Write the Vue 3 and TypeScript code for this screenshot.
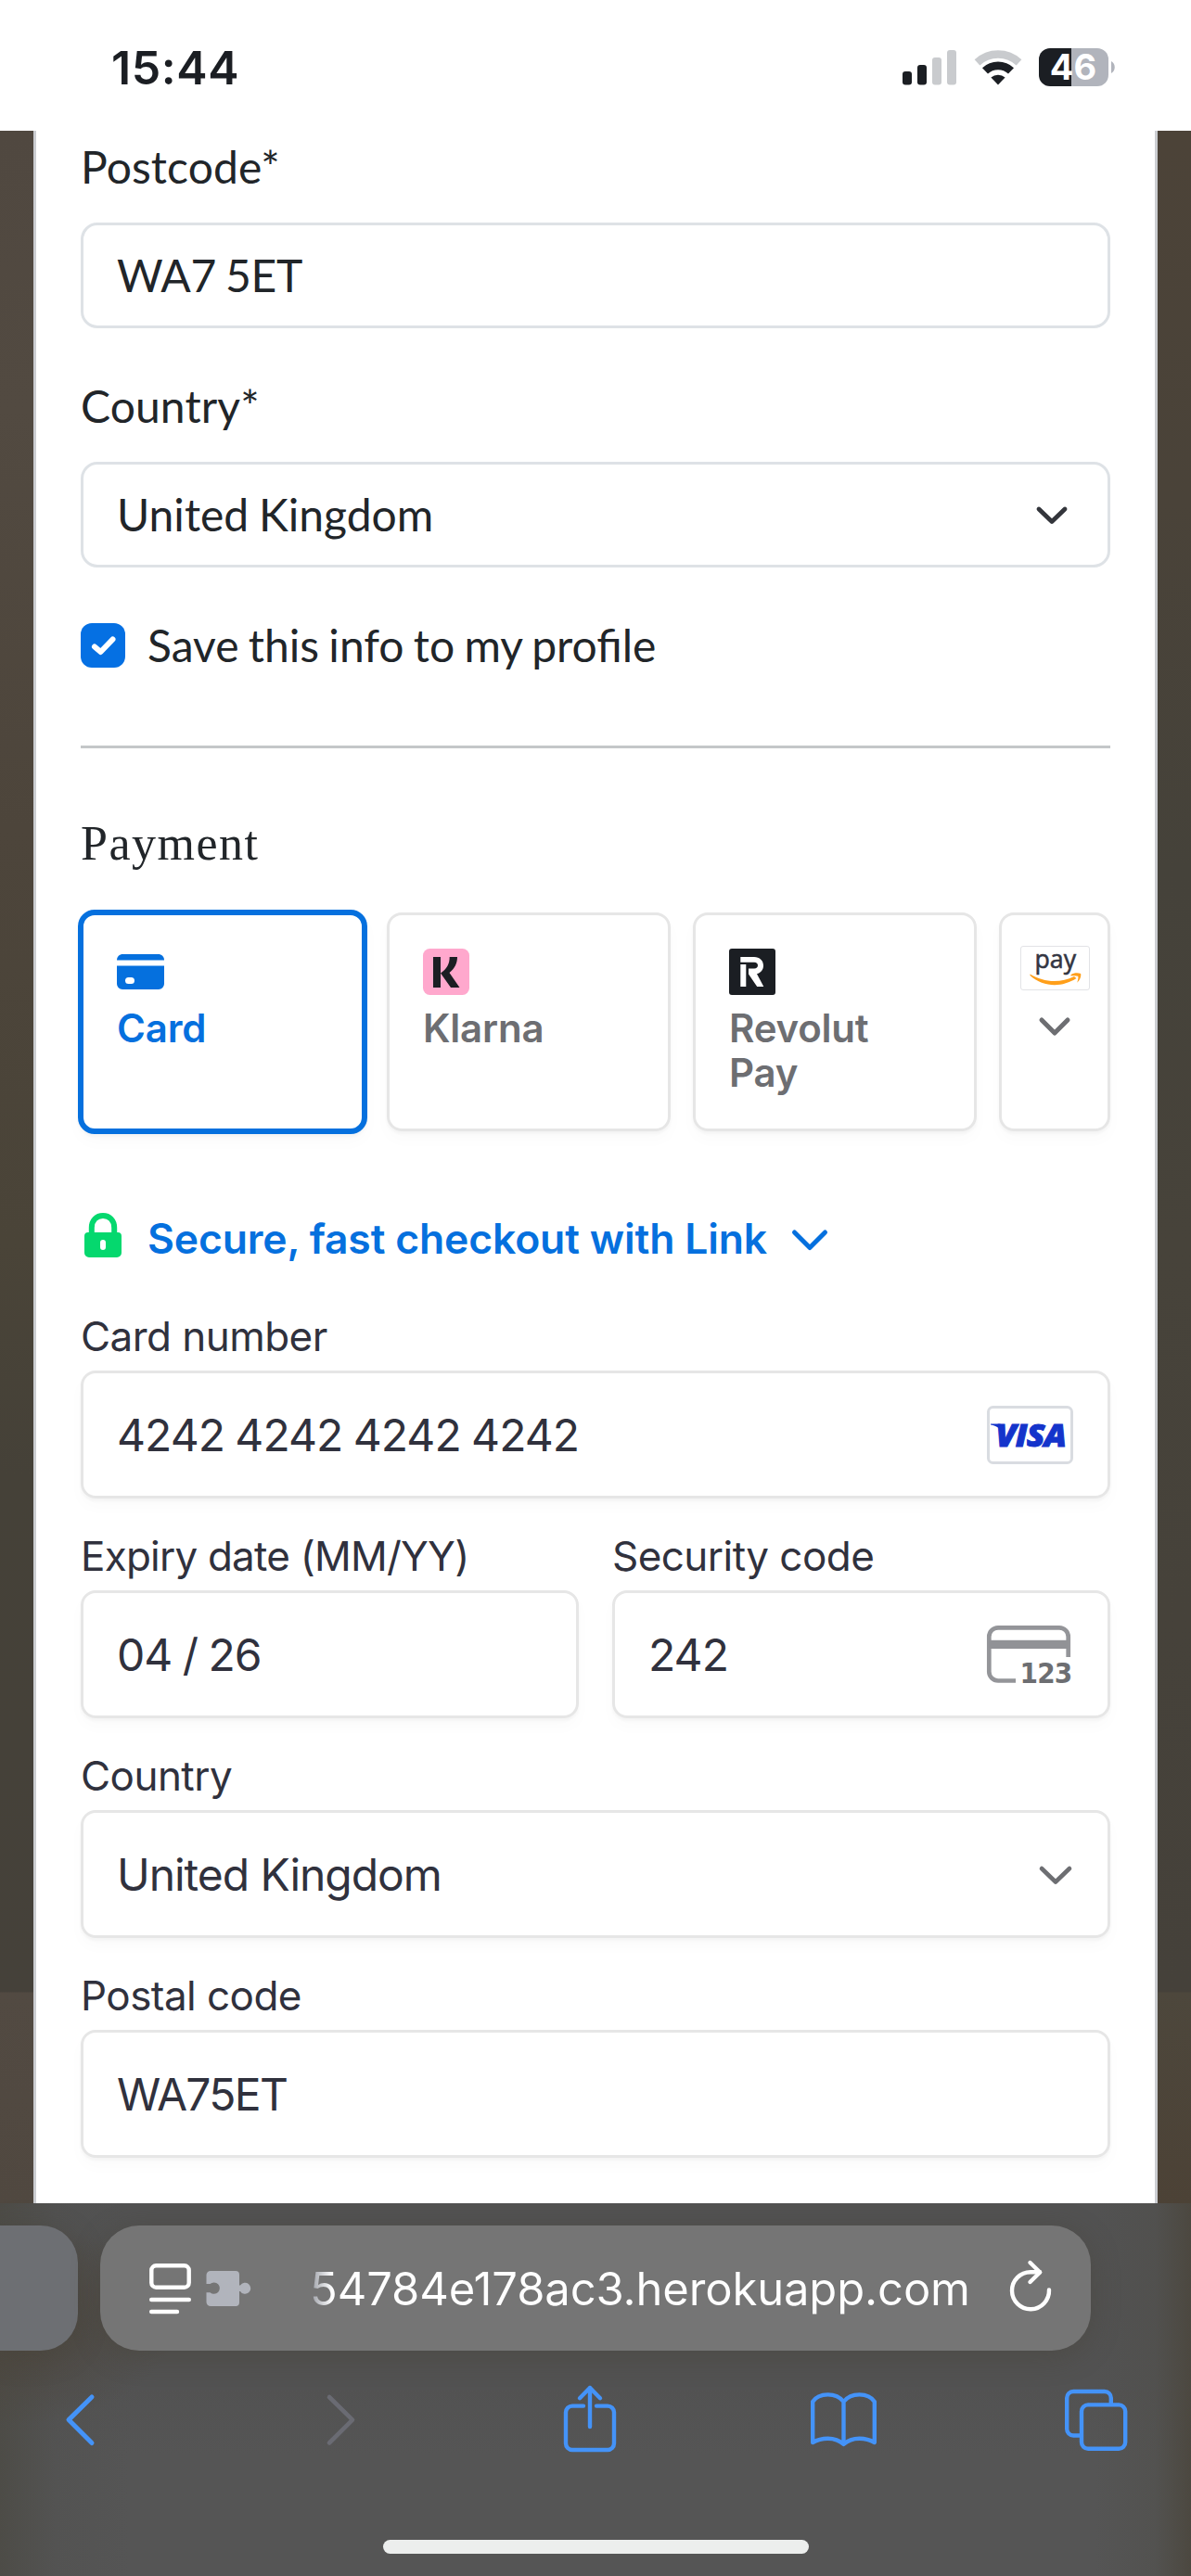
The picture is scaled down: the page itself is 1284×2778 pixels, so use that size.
<script setup lang="ts">
interface Method {
  id: string
  label: string
}

const methods: Method[] = [
  { id: 'card', label: 'Card' },
  { id: 'klarna', label: 'Klarna' },
  { id: 'revolut', label: 'Revolut Pay' },
]
const selected = 'card'

const address = {
  postcode: 'WA7 5ET',
  country: 'United Kingdom',
}

const card = {
  number: '4242 4242 4242 4242',
  expiry: '04 / 26',
  cvc: '242',
  country: 'United Kingdom',
  postal: 'WA75ET',
}

const host = '54784e178ac3.herokuapp.com'
</script>

<template>
  <div class="screen">
    <header class="status">
      <span class="time">15:44</span>
      <div class="indicators">
        <svg class="signal" width="58" height="38" viewBox="0 0 58 38">
          <rect x="0" y="23" width="10" height="14.5" rx="3" fill="#1b1e23" />
          <rect x="16" y="16" width="10" height="21.5" rx="3" fill="#1b1e23" />
          <rect x="32" y="8" width="10" height="29.5" rx="3" fill="#c9cbce" />
          <rect x="48" y="0" width="10" height="37.5" rx="3" fill="#c9cbce" />
        </svg>
        <svg class="wifi" width="52" height="38" viewBox="0 0 52 38">
          <path d="M3.5 13.4 A33 33 0 0 1 48.5 13.4" fill="none" stroke="#c9cbce" stroke-width="8.4" />
          <path d="M12 22.4 A20.5 20.5 0 0 1 40 22.4" fill="none" stroke="#1b1e23" stroke-width="8.8" />
          <path d="M26 37.5 L18.4 29.6 A11.5 11.5 0 0 1 33.6 29.6 Z" fill="#1b1e23" />
        </svg>
        <div class="battery"><span>46</span></div>
        <svg class="tip" width="4" height="13" viewBox="0 0 4 13">
          <path d="M0 0 C5 2.5 5 10.5 0 13 Z" fill="#b1b4bc" />
        </svg>
      </div>
    </header>

    <main class="page">
      <section class="sheet">
        <div class="label">Postcode*</div>
        <div class="box">
          <span class="tight">{{ address.postcode }}</span>
        </div>

        <div class="label second">Country*</div>
        <div class="box">
          <span class="country">{{ address.country }}</span>
          <svg class="chev-a" width="36" height="24" viewBox="0 0 36 24">
            <path d="M4 5 L18 18.5 L32 5" fill="none" stroke="#33353b" stroke-width="4.8" stroke-linecap="round" stroke-linejoin="round" />
          </svg>
        </div>

        <div class="save">
          <span class="check">
            <svg width="48" height="48" viewBox="0 0 48 48">
              <path d="M15 25.5 L21.5 31 L34.5 17.5" fill="none" stroke="#fff" stroke-width="6" stroke-linecap="round" stroke-linejoin="round" />
            </svg>
          </span>
          <span class="save-text">Save this info to my profile</span>
        </div>

        <div class="rule"></div>

        <h2 class="title">Payment</h2>

        <div class="tabs">
          <div v-for="m in methods" :key="m.id" class="tab" :class="{ active: m.id === selected }">
            <div class="logo">
              <svg v-if="m.id === 'card'" width="51" height="38" viewBox="0 0 51 38">
                <path d="M0 6.4 C0 2.5 2.8 0 6.5 0 H44.5 C48.2 0 51 2.5 51 6.4 Z" fill="#0570de" />
                <path fill-rule="evenodd" d="M0 12.6 H51 V32 a6 6 0 0 1 -6 6 H6 a6 6 0 0 1 -6 -6 Z M12.5 25 a3.5 3.5 0 0 0 0 7 H15.5 a3.5 3.5 0 0 0 0 -7 Z" fill="#0570de" />
              </svg>
              <svg v-else-if="m.id === 'klarna'" width="50" height="50" viewBox="0 0 50 50">
                <rect width="50" height="50" rx="7.5" fill="#ffa8cd" />
                <path d="M11 9 H19 V42 H11 Z M28.7 9 H37 C37 16 34 21.5 28.5 26 L39.5 42 H30 L19 26.5 C25.5 22 28.7 17 28.7 9 Z" fill="#1b1e23" />
              </svg>
              <svg v-else width="50" height="50" viewBox="0 0 50 50">
                <rect width="50" height="50" rx="3" fill="#1b1e23" />
                <path d="M12.3 17 H18.3 V41 H12.3 Z M12.3 9 H27 C33 9 37 13 37 18.3 C37 22.8 34.2 26.2 30 27.3 L37.3 41 H30.2 L21 27.4 V21.6 H27.2 C29.5 21.6 31 20.2 31 18.1 C31 16 29.5 14.7 27.2 14.7 H12.3 Z" fill="#fff" />
              </svg>
            </div>
            <div class="tab-label">{{ m.label }}</div>
          </div>
          <div class="tab more">
            <svg width="75" height="48" viewBox="0 0 75 48">
              <rect x="0.5" y="0.5" width="74" height="47" rx="2.5" fill="#fff" stroke="#e2e3e6" />
              <text x="15.5" y="23.6" font-family="Open Sans, sans-serif" font-size="28" textLength="44.5" lengthAdjust="spacingAndGlyphs" fill="#333542" stroke="#333542" stroke-width="0.6">pay</text>
              <path d="M10.5 30.5 C25 39.5 43 40.5 58 33 L60.5 35 C45 45 25 45 10.5 32 Z" fill="#ff9f1a" />
              <path d="M54.5 31.2 C57.5 29 62 28.8 65.2 30 C65.8 33 64.2 37 61.2 39.8 C62.2 36.6 62.8 34 62.2 32.8 C60.5 32 57.5 32 54.5 32.5 Z" fill="#ff9f1a" />
            </svg>
            <svg class="more-chev" width="38" height="24" viewBox="0 0 38 24">
              <path d="M5 4 L19 18 L33 4" fill="none" stroke="#6d6e72" stroke-width="5" stroke-linecap="round" stroke-linejoin="round" />
            </svg>
          </div>
        </div>

        <div class="link-row">
          <svg class="lock" width="40" height="48" viewBox="0 0 40 48">
            <path d="M7.8 23 V16 C7.8 8 13 3 20 3 S32.2 8 32.2 16 V23" fill="none" stroke="#05d86e" stroke-width="6" />
            <path fill-rule="evenodd" d="M4 21 H36 a4 4 0 0 1 4 4 V43 a5 5 0 0 1 -5 5 H5 a5 5 0 0 1 -5 -5 V25 a4 4 0 0 1 4 -4 Z M20 29 a3 3 0 0 0 -3 3 V37 a3 3 0 0 0 6 0 V32 a3 3 0 0 0 -3 -3 Z" fill="#05d86e" />
          </svg>
          <span class="link-text">Secure, fast checkout with Link</span>
          <svg class="link-chev" width="42" height="28" viewBox="0 0 42 28">
            <path d="M4.5 5 L21 21.5 L37.5 5" fill="none" stroke="#0570de" stroke-width="5" stroke-linecap="round" stroke-linejoin="round" />
          </svg>
        </div>

        <div class="fields">
          <div class="field">
            <div class="flabel">Card number</div>
            <div class="fbox">
              <span class="digits">{{ card.number }}</span>
              <svg class="visa" width="93" height="63" viewBox="0 0 93 63">
                <rect x="1.5" y="1.5" width="90" height="60" rx="5" fill="#fff" stroke="#d9dce1" stroke-width="3" />
                <text x="9.5" y="44" font-family="Open Sans, sans-serif" font-size="34" font-style="italic" font-weight="800" textLength="75.5" lengthAdjust="spacingAndGlyphs" fill="#1434cb" stroke="#1434cb" stroke-width="1">VISA</text>
                <path d="M4 19.4 H13 C15.5 19.4 16.8 20.6 17.4 23.5 L19 32 C15.5 25 10.5 21.6 4 20.6 Z" fill="#1434cb" />
              </svg>
            </div>
          </div>

          <div class="pair">
            <div class="field">
              <div class="flabel expiry">Expiry date (MM/YY)</div>
              <div class="fbox"><span class="digits">{{ card.expiry }}</span></div>
            </div>
            <div class="field">
              <div class="flabel">Security code</div>
              <div class="fbox">
                <span class="digits">{{ card.cvc }}</span>
                <svg class="cvc" width="93" height="63" viewBox="0 0 93 63">
                  <path d="M31 59.5 H12 a9.7 9.7 0 0 1 -9.7 -9.7 V12 a9.7 9.7 0 0 1 9.7 -9.7 H78 a9.7 9.7 0 0 1 9.7 9.7 V34" fill="none" stroke="#949599" stroke-width="4.7" />
                  <rect x="2" y="15.8" width="86" height="9.2" fill="#919296" />
                  <text x="35.5" y="62" font-family="DejaVu Sans, sans-serif" font-size="31" font-weight="700" textLength="56" lengthAdjust="spacingAndGlyphs" fill="#6d6e72">123</text>
                </svg>
              </div>
            </div>
          </div>

          <div class="field">
            <div class="flabel">Country</div>
            <div class="fbox">
              <span class="region">{{ card.country }}</span>
              <svg class="chev-b" width="38" height="24" viewBox="0 0 38 24">
                <path d="M4 5 L19 19.5 L34 5" fill="none" stroke="#6d6e72" stroke-width="4.6" stroke-linecap="round" stroke-linejoin="round" />
              </svg>
            </div>
          </div>

          <div class="field">
            <div class="flabel">Postal code</div>
            <div class="fbox"><span class="postal">{{ card.postal }}</span></div>
          </div>
        </div>
      </section>
    </main>

    <footer class="browser">
      <div class="urls">
        <div class="prev"></div>
        <div class="pill">
          <svg class="reader" width="48" height="58" viewBox="0 0 48 58">
            <rect x="3.3" y="3.3" width="40.4" height="23.4" rx="5" fill="none" stroke="#fff" stroke-width="4.4" />
            <path d="M3.2 40 H43.8 M3.2 53 H31" stroke="#fff" stroke-width="4.4" stroke-linecap="round" />
          </svg>
          <svg class="puzzle" width="48" height="40" viewBox="0 0 48 40">
            <path d="M5 1 H32 a4 4 0 0 1 4 4 V16.5 H37 A6.1 6.1 0 1 1 37 23 H36 V35 a4 4 0 0 1 -4 4 H5 a4.5 4.5 0 0 1 -4.5 -4.5 V24.2 H4.5 A6.2 6.2 0 1 0 4.5 15 H0.5 V5.5 a4.5 4.5 0 0 1 4.5 -4.5 Z" fill="#b1b4bc" />
          </svg>
          <span class="host">{{ host }}</span>
          <svg class="reload" width="52" height="60" viewBox="0 0 52 60">
            <path d="M46 34.5 A20 20 0 1 1 26 15.2 H36" fill="none" stroke="#fff" stroke-width="4.4" stroke-linecap="round" />
            <path d="M25.5 5 L36.2 15.5 L25.5 26" fill="none" stroke="#fff" stroke-width="4.4" stroke-linecap="round" stroke-linejoin="round" />
          </svg>
        </div>
      </div>

      <nav class="tools">
        <svg class="t-back" width="38" height="60" viewBox="0 0 38 60">
          <path d="M31 5 L6 29.6 L31 54.5" fill="none" stroke="#4493f8" stroke-width="5" stroke-linecap="round" stroke-linejoin="round" />
        </svg>
        <svg class="t-fwd" width="38" height="60" viewBox="0 0 38 60">
          <path d="M7 5 L32 29.6 L7 54.5" fill="none" stroke="#6a6b73" stroke-width="4.6" stroke-linecap="round" stroke-linejoin="round" />
        </svg>
        <svg class="t-share" width="62" height="76" viewBox="0 0 62 76">
          <path d="M24 24.6 H12 a7 7 0 0 0 -7 7 V65 a7 7 0 0 0 7 7 H50 a7 7 0 0 0 7 -7 V31.6 a7 7 0 0 0 -7 -7 H38 M31 5 V47 M20 16.2 L31 5 L42 16.2" fill="none" stroke="#4493f8" stroke-width="4.4" stroke-linecap="round" stroke-linejoin="round" />
        </svg>
        <svg class="t-book" width="76" height="64" viewBox="0 0 76 64">
          <path d="M37.5 12 C33.5 7 27.5 4.4 20.5 4.4 C13.5 4.4 7.5 7 4.2 12 V56 C8.5 53.5 14 51.8 20.5 51.8 C27.5 51.8 33 53.8 37.5 58 C42 53.8 47.5 51.8 54.5 51.8 C61 51.8 66.5 53.5 70.8 56 V12 C67.5 7 61.5 4.4 54.5 4.4 C47.5 4.4 41.5 7 37.5 12 Z M37.5 12 V58" fill="none" stroke="#4493f8" stroke-width="4.4" stroke-linejoin="round" />
        </svg>
        <svg class="t-tabs" width="72" height="72" viewBox="0 0 72 72">
          <path d="M51.8 17 V11 a7 7 0 0 0 -7 -7 H11.2 a7 7 0 0 0 -7 7 V44.5 a7 7 0 0 0 7 7 H19" fill="none" stroke="#4493f8" stroke-width="4.4" />
          <rect x="20" y="18.4" width="47.2" height="47.4" rx="7" fill="none" stroke="#4493f8" stroke-width="4.4" />
        </svg>
      </nav>

      <div class="home"></div>
    </footer>
  </div>
</template>

<style>
body {
  margin: 0;
  background: #fff;
}
</style>

<style scoped>
.screen {
  width: 1284px;
  height: 2778px;
  display: flex;
  flex-direction: column;
  overflow: hidden;
  background: #fff;
  font-family: Inter, sans-serif;
}

.screen svg {
  display: block;
  flex: none;
  overflow: visible;
}

.status {
  box-sizing: border-box;
  height: 141px;
  flex: none;
  padding: 4px 82px 0 120px;
  display: flex;
  align-items: center;
  justify-content: space-between;
}

.time {
  font-size: 50px;
  font-weight: 600;
  letter-spacing: 0.6px;
  color: #1b1e23;
}

.indicators {
  display: flex;
  align-items: center;
}

.wifi {
  margin-left: 18.5px;
}

.battery {
  width: 75px;
  height: 41px;
  margin-left: 18.5px;
  border-radius: 12px;
  background: linear-gradient(90deg, #1b1e23 35px, #b1b4bc 35px);
  color: #fff;
  font-size: 38px;
  font-weight: 700;
  line-height: 41px;
  text-align: center;
  text-indent: -1px;
}

.tip {
  margin-left: 3px;
}

.page {
  height: 2235px;
  flex: none;
  padding: 0 36px;
  background:
    linear-gradient(180deg, #504840 0, #524a41 300px, #4d453b 750px, #4a4438 1200px, #454138 1450px, #45413a 2007px, #524a42 2008px, #504840 2235px) 0 0 / 642px 100% no-repeat,
    linear-gradient(180deg, #4c4338 0, #4a4339 400px, #45423a 800px, #47433a 1200px, #45413a 2007px, #4d473c 2008px, #4c4236 2235px) 642px 0 / 642px 100% no-repeat;
}

.sheet {
  box-sizing: border-box;
  width: 1212px;
  height: 2235px;
  padding: 3px 48px 0;
  border: solid #cbcdd1;
  border-width: 0 3px;
  background: #fff;
  overflow: hidden;
}

.label,
.box,
.save {
  font-family: Lato, sans-serif;
  font-size: 48px;
  line-height: 72px;
  color: #212529;
  white-space: nowrap;
}

.label {
  margin-bottom: 24px;
  letter-spacing: 0.1px;
}

.second {
  margin-top: 48px;
}

.box {
  box-sizing: border-box;
  height: 114px;
  padding: 0 42px 0 36px;
  border: 3px solid #dee2e6;
  border-radius: 18px;
  display: flex;
  align-items: center;
  justify-content: space-between;
}

.tight {
  letter-spacing: -0.3px;
  word-spacing: -2px;
}

.country {
  word-spacing: -1.5px;
}

.save {
  margin-top: 48px;
  display: flex;
  align-items: flex-start;
}

.check {
  width: 48px;
  height: 48px;
  margin: 12px 24px 0 0;
  border-radius: 12px;
  background: #0570e3;
}

.save-text {
  word-spacing: -2px;
}

.rule {
  height: 3px;
  margin-top: 72px;
  background: #c4c7c9;
}

.title {
  margin: 73px 0 44px;
  font-family: "Liberation Serif", serif;
  font-size: 52px;
  font-weight: 400;
  line-height: 60px;
  letter-spacing: 1.5px;
  color: #212529;
}

.tabs {
  display: flex;
  gap: 24px;
}

.tab {
  box-sizing: border-box;
  width: 306px;
  height: 236px;
  padding: 36px;
  border: 3px solid #e6e6e6;
  border-radius: 16px;
  box-shadow: 0 3px 3px rgba(0, 0, 0, 0.03), 0 9px 18px rgba(0, 0, 0, 0.02);
}

.tab.active {
  width: 312px;
  height: 242px;
  margin: -3px;
  border: 6px solid #0570de;
  border-radius: 18px;
}

.logo {
  height: 50px;
  display: flex;
  align-items: center;
}

.tab-label {
  width: 190px;
  margin-top: 11.5px;
  font-size: 42px;
  font-weight: 600;
  line-height: 48px;
  letter-spacing: -0.2px;
  color: #6d6e72;
}

.active .tab-label {
  color: #0570de;
}

.more {
  width: 120px;
  padding: 33px 0 0;
  display: flex;
  flex-direction: column;
  align-items: center;
}

.more-chev {
  margin-top: 27.5px;
}

.link-row {
  margin-top: 86px;
  height: 60px;
  padding-left: 4px;
  display: flex;
  align-items: flex-start;
}

.lock {
  margin-top: 2px;
}

.link-text {
  margin-left: 28px;
  font-size: 44.5px;
  font-weight: 600;
  line-height: 60px;
  letter-spacing: -0.16px;
  color: #0570de;
  white-space: nowrap;
}

.link-chev {
  margin: 18px 0 0 25px;
}

.fields {
  margin-top: 48px;
  display: flex;
  flex-direction: column;
  gap: 35px;
}

.pair {
  display: grid;
  grid-template-columns: 1fr 1fr;
  gap: 36px;
}

.flabel {
  margin-bottom: 10px;
  font-size: 44px;
  line-height: 54px;
  letter-spacing: -0.55px;
  color: #30313d;
  white-space: nowrap;
}

.flabel.expiry {
  letter-spacing: -0.78px;
}

.fbox {
  box-sizing: border-box;
  height: 138px;
  padding: 0 36px;
  border: 3px solid #e6e6e6;
  border-radius: 16px;
  box-shadow: 0 3px 3px rgba(0, 0, 0, 0.03), 0 9px 18px rgba(0, 0, 0, 0.02);
  display: flex;
  align-items: center;
  justify-content: space-between;
  font-size: 48px;
  letter-spacing: -0.88px;
  color: #30313d;
  white-space: nowrap;
}

.digits {
  letter-spacing: -0.95px;
  word-spacing: -1.2px;
}

.region {
  letter-spacing: -1.05px;
}

.postal {
  letter-spacing: -1.7px;
}

.visa,
.cvc {
  margin-right: 1px;
}

.chev-a {
  margin-top: 1px;
}

.chev-b {
  margin: 2px 1px 0 0;
}

.browser {
  height: 402px;
  flex: none;
  background:
    radial-gradient(ellipse 190px 110px at 0 130px, #4c463e 0, rgba(76, 70, 62, 0) 100%),
    linear-gradient(90deg, #4d4c47 0, rgba(80, 80, 78, 0.4) 60px, rgba(85, 85, 85, 0) 140px, rgba(85, 85, 85, 0) 1180px, rgba(80, 79, 75, 0.5) 1245px, #4c4840 1284px),
    linear-gradient(180deg, #525252 0, #525252 200px, #555 270px, #555 100%);
}

.urls {
  padding-top: 24px;
  display: flex;
  gap: 24px;
}

.prev,
.pill {
  height: 135px;
  box-shadow: 0 6px 30px rgba(70, 66, 56, 0.45);
}

.prev {
  width: 84px;
  flex: none;
  border-radius: 0 40px 40px 0;
  background: #6d6f73;
}

.pill {
  box-sizing: border-box;
  width: 1068px;
  padding: 0 39px 0 52px;
  border-radius: 42px;
  background: #757575;
  display: flex;
  align-items: center;
}

.reader {
  margin-top: 2px;
}

.puzzle {
  margin-left: 14px;
}

.host {
  margin: 2px 0 0 64px;
  font-size: 49px;
  line-height: 60px;
  letter-spacing: -0.15px;
  white-space: nowrap;
  background: linear-gradient(90deg, #a3a6ad 3px, #fff 24px);
  -webkit-background-clip: text;
  background-clip: text;
  color: transparent;
}

.reload {
  margin: 0 0 5px auto;
}

.tools {
  height: 76px;
  margin-top: 35px;
  padding: 0 66px 0 68px;
  display: flex;
  align-items: flex-start;
}

.t-back {
  margin-top: 10px;
}

.t-fwd {
  margin: 10px 0 0 242px;
}

.t-share {
  margin-left: 219px;
}

.t-book {
  margin: 8px 0 0 205px;
}

.t-tabs {
  margin: 5px 0 0 198px;
}

.home {
  width: 459px;
  height: 15px;
  margin: 93px auto 0;
  border-radius: 8px;
  background: #eceeed;
}
</style>
